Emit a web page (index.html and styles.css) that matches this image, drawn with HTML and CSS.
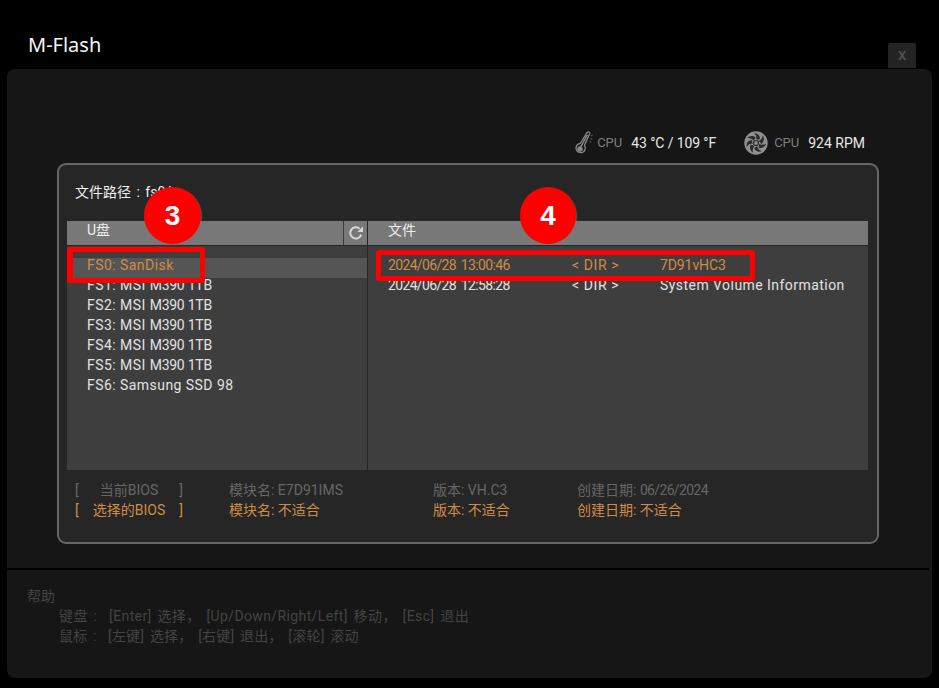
FILE: index.html
```html
<!DOCTYPE html>
<html lang="zh">
<head>
<meta charset="utf-8">
<title>M-Flash</title>
<link rel="stylesheet" href="styles.css">
</head>
<body>
<div class="page">
  <header class="topbar">
    <h1 class="title">M-Flash</h1>
    <div class="close">X</div>
  </header>
  <main class="panel">
    <div class="sensors">
      <div class="sensor">
        <svg class="icon-temp" viewBox="0 0 20 24" width="20" height="24">
          <path d="M13.200 1.500c1-1.200 2.800-.5 2.500 1L10.400 14.400a4.600 4.600 0 1 1-4.200-1.900z" fill="none" stroke="#8a8a8a" stroke-width="1.300"/>
          <circle cx="6" cy="18" r="2.700" fill="#8a8a8a"/>
          <path d="M6.500 16.400 13.300 3.800" stroke="#8a8a8a" stroke-width="1.400"/>
          <path d="M17 5l1.700-.9M16.500 7.800l1.900.2M15.500 10.400l1.400 1" stroke="#777" stroke-width=".9"/>
        </svg>
        <span class="sensor-label">CPU</span>
        <span class="sensor-value sensor-temp">43 °C / 109 °F</span>
      </div>
      <div class="sensor">
        <svg class="icon-fan" viewBox="0 0 24 24" width="24" height="24">
          <circle cx="12" cy="12" r="11.700" fill="#8f8f8f"/>
          <g fill="#2c2c2c">
            <path d="M12.200 8.600C12.800 6.200 12.200 3.800 10.200 2c3.400.3 5.900 2.600 5.900 6.300z"/>
            <path transform="rotate(51.400 12 12)" d="M12.200 8.600C12.800 6.200 12.200 3.800 10.200 2c3.400.3 5.900 2.600 5.900 6.300z"/>
            <path transform="rotate(102.900 12 12)" d="M12.200 8.600C12.800 6.200 12.200 3.800 10.200 2c3.400.3 5.900 2.600 5.900 6.300z"/>
            <path transform="rotate(154.300 12 12)" d="M12.200 8.600C12.800 6.200 12.200 3.800 10.200 2c3.400.3 5.900 2.600 5.900 6.300z"/>
            <path transform="rotate(205.700 12 12)" d="M12.200 8.600C12.800 6.200 12.200 3.800 10.200 2c3.400.3 5.900 2.600 5.900 6.300z"/>
            <path transform="rotate(257.100 12 12)" d="M12.200 8.600C12.800 6.200 12.200 3.800 10.200 2c3.400.3 5.900 2.600 5.900 6.300z"/>
            <path transform="rotate(308.600 12 12)" d="M12.200 8.600C12.800 6.200 12.200 3.800 10.200 2c3.400.3 5.900 2.600 5.900 6.300z"/>
          </g>
          <circle cx="12" cy="12" r="2.500" fill="#8f8f8f" stroke="#2c2c2c" stroke-width="1.200"/>
        </svg>
        <span class="sensor-label">CPU</span>
        <span class="sensor-value">924 RPM</span>
      </div>
    </div>

    <section class="card">
      <div class="path">文件路径 : fs0:\</div>
      <div class="browser">
        <div class="pane-left">
          <div class="head head-left">
            <span class="head-title">U盘</span>
            <div class="refresh">
              <svg viewBox="0 0 16 16" width="16" height="16">
                <path d="M13.200 9.600A5.600 5.600 0 1 1 11.800 3.900" fill="none" stroke="#d8d8d8" stroke-width="2"/>
                <path d="M15 1.400V7H9.400z" fill="#d8d8d8"/>
              </svg>
            </div>
          </div>
          <ul class="drives">
            <li class="drive drive-on">FS0: SanDisk</li>
            <li class="drive">FS1: MSI <span class="model">M390 1TB</span></li>
            <li class="drive">FS2: MSI <span class="model">M390 1TB</span></li>
            <li class="drive">FS3: MSI <span class="model">M390 1TB</span></li>
            <li class="drive">FS4: MSI <span class="model">M390 1TB</span></li>
            <li class="drive">FS5: MSI <span class="model">M390 1TB</span></li>
            <li class="drive">FS6: Samsung SSD 98</li>
          </ul>
        </div>
        <div class="pane-right">
          <div class="head"><span class="head-title">文件</span></div>
          <div class="files">
            <div class="file file-on"><span class="num">2024/06/28 13:00:46</span><span class="dir">&lt; DIR &gt;</span><span class="code">7D91vHC3</span></div>
            <div class="file"><span class="num">2024/06/28 12:58:28</span><span class="dir">&lt; DIR &gt;</span><span class="name">System Volume Information</span></div>
          </div>
        </div>
      </div>
      <div class="bios">
        <div class="bios-row">
          <div class="bracket"><span>[</span><span>当前BIOS</span><span>]</span></div>
          <span>模块名: E7D91IMS</span>
          <span>版本: VH.C3</span>
          <span>创建日期: <span class="num">06/26/2024</span></span>
        </div>
        <div class="bios-row bios-sel">
          <div class="bracket"><span>[</span><span>选择的BIOS</span><span>]</span></div>
          <span>模块名: 不适合</span>
          <span>版本: 不适合</span>
          <span>创建日期: 不适合</span>
        </div>
      </div>
    </section>

    <footer class="help">
      <div>帮助</div>
      <div class="help-line help-keys">键盘&nbsp;:&nbsp;&nbsp;[Enter] 选择， [Up/Down/Right/Left] 移动， [Esc] 退出</div>
      <div class="help-line">鼠标&nbsp;:&nbsp;&nbsp;[左键] 选择， [右键] 退出， [滚轮] 滚动</div>
    </footer>
  </main>

  <div class="mark mark-drive"></div>
  <div class="mark mark-file"></div>
  <div class="badge badge-3">3</div>
  <div class="badge badge-4">4</div>
</div>
</body>
</html>
```

FILE: styles.css
```css
* { box-sizing: border-box; }
html, body { margin: 0; padding: 0; background: #000; }
body { font-family: Roboto, "Noto Sans CJK SC", sans-serif; font-size: 14px; line-height: 20px; color: #e2e2e2; }
ul { list-style: none; margin: 0; padding: 0; }

.page { position: relative; width: 939px; height: 688px; overflow: hidden; }

.topbar { height: 69px; display: flex; justify-content: space-between; align-items: flex-end; padding: 0 23px 1px 28px; }
.title { margin: 0 0 9px; font: 400 20px/28px "Noto Sans", sans-serif; color: #f4f4f4; }
.close { width: 28px; height: 25px; background: #232323; color: #555; border-radius: 2px 2px 0 0; display: flex; align-items: center; justify-content: center; font-size: 13px; font-weight: 500; }

.panel { margin: 0 7px; height: 609px; background: #161616; border-radius: 8px; }

.sensors { height: 94px; padding: 62px 67px 0 0; display: flex; justify-content: flex-end; gap: 28px; }
.sensor { display: flex; align-items: center; height: 24px; }
.icon-temp { margin-right: 3px; }
.icon-fan { margin-right: 6px; }
.sensor-label { color: #7e7e7e; font-size: 13px; margin-right: 9px; }
.sensor-value { color: #e8e8e8; font-size: 14px; }
.sensor-temp { letter-spacing: -.1px; }

.card { margin-left: 50px; width: 822px; height: 381px; border: 2px solid #666; border-radius: 9px; background: #262626; padding: 0 9px 0 8px; }
.path { height: 56px; padding: 17px 0 0 8px; color: #eee; word-spacing: 2px; }

.browser { display: flex; height: 249px; }
.pane-left { width: 301px; border-right: 1px solid #262626; background: #3e3e3e; }
.pane-right { flex: 1; background: #3e3e3e; }
.head { height: 25px; background: #787878; border-bottom: 1px solid #262626; display: flex; align-items: stretch; color: #eee; }
.head-title { padding: 0 0 0 20px; flex: 1; line-height: 19px; }
.refresh { width: 24px; border-left: 1px solid #3a3a3a; display: flex; align-items: center; justify-content: center; }

.drives { padding-top: 12px; }
.drive { height: 20px; padding-left: 20px; white-space: nowrap; letter-spacing: .45px; line-height: 14px; }
.model { letter-spacing: -.25px; }
.drive-on { background: #555; color: #d08c45; }

.files { padding: 12px 0 0 20px; }
.file { display: grid; grid-template-columns: 184px 88px 1fr; height: 20px; line-height: 14px; white-space: nowrap; }
.file-on { color: #d08c45; }
.num { letter-spacing: -.65px; word-spacing: 2px; }
.dir { letter-spacing: .6px; }
.code { letter-spacing: -.1px; }
.name { letter-spacing: .45px; }

.bios { padding: 10px 0 0 8px; color: #666; }
.bios-row { display: grid; grid-template-columns: 154px 204px 144px 1fr; height: 20px; white-space: nowrap; }
.bracket { width: 108px; display: flex; justify-content: space-between; }
.bios-sel { color: #d08c45; }

.help { margin: 24px 3px 0 0; border-top: 2px solid; border-image: linear-gradient(#000 50%, #4a4a4a 50%) 2; padding: 16px 0 0 20px; color: #444; }
.help-line { padding-left: 32px; word-spacing: 2px; letter-spacing: .2px; }
.help-keys { letter-spacing: .38px; }

.mark { position: absolute; border: 5px solid #f00; border-radius: 3px; }
.mark-drive { left: 67px; top: 247px; width: 138px; height: 36px; border-left-width: 6px; }
.mark-file { left: 376px; top: 250px; width: 379px; height: 31px; }

.badge { position: absolute; border-radius: 50%; background: #f00; color: #fff; font: 700 28px/1 "Liberation Sans", Arial, sans-serif; display: flex; align-items: center; justify-content: center; box-shadow: 1px 1px 1px rgba(120,120,120,.6); }
.badge-3 { left: 144px; top: 187px; width: 57px; height: 57px; }
.badge-4 { left: 520px; top: 187px; width: 56px; height: 57px; }
```
